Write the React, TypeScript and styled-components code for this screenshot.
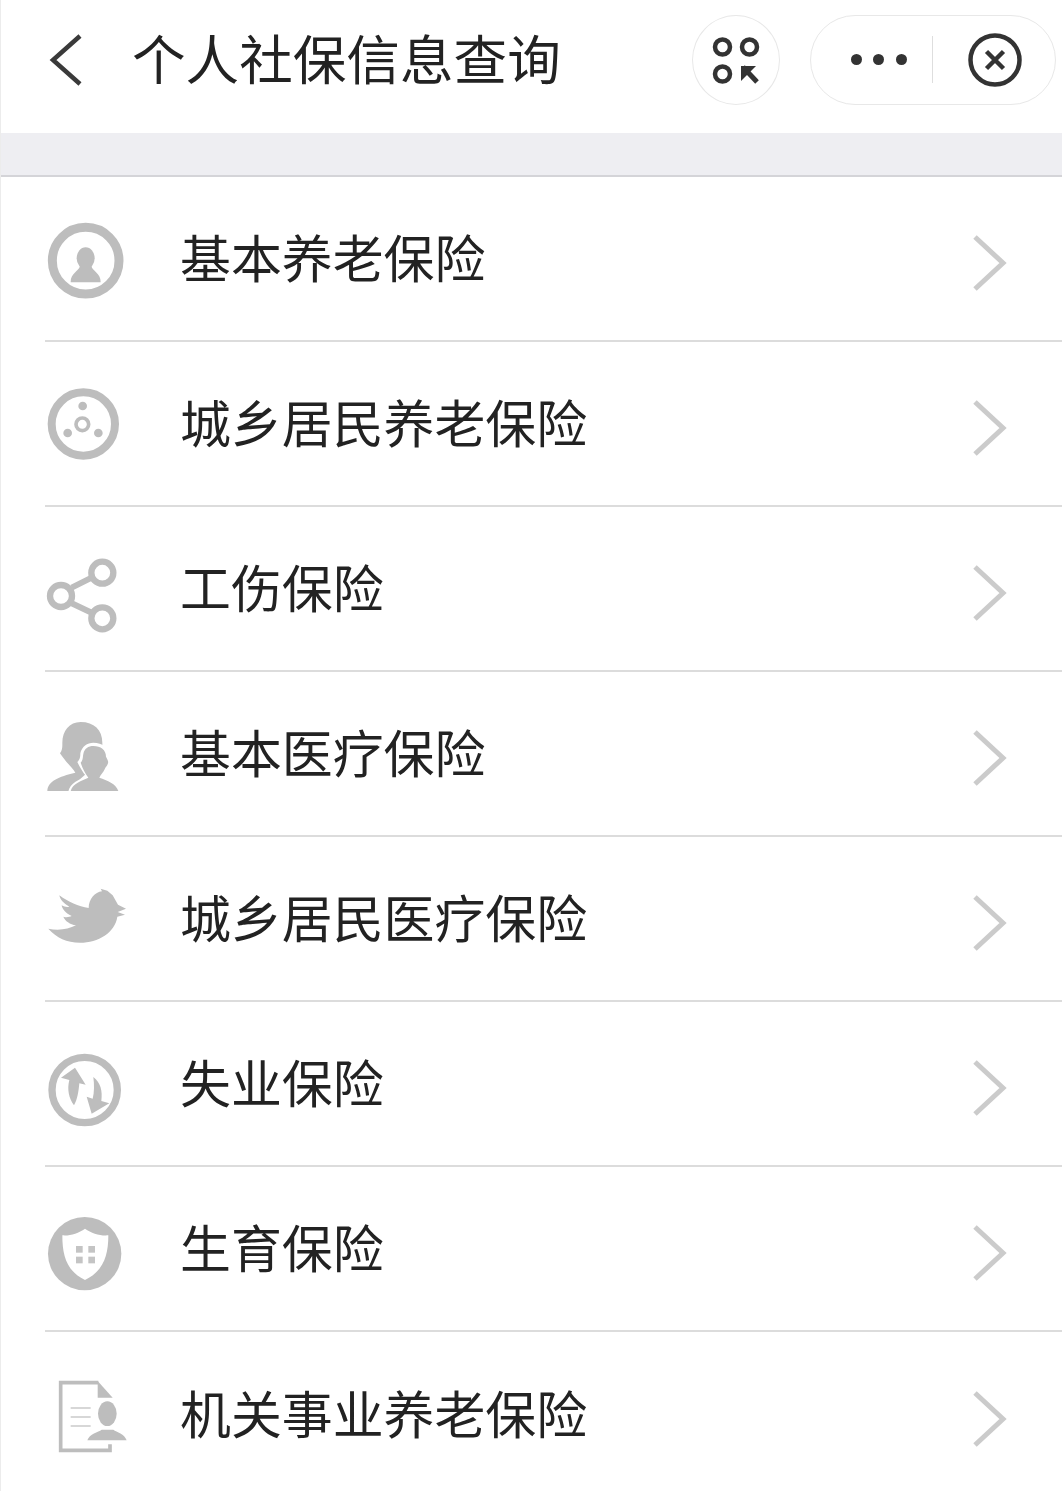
import React from 'react';
import styled, { createGlobalStyle } from 'styled-components';

const Global = createGlobalStyle`
  html, body { margin: 0; padding: 0; background: #fff; }
  #root { width: 1062px; height: 1491px; overflow: hidden; }
`;

const Page = styled.div`
  width: 1062px;
  height: 1491px;
  box-sizing: border-box;
  background: #fff;
  border-left: 1px solid #ececec;
  font-family: "Noto Sans CJK SC", "Liberation Sans", sans-serif;
  color: #222;
  overflow: hidden;
`;

const Header = styled.header`
  height: 133px;
  box-sizing: border-box;
  display: flex;
  align-items: center;
  padding: 0 6px 14px 47px;
`;

const BackIcon = styled.svg`
  width: 36px;
  height: 56px;
  flex: none;
`;

const Title = styled.h1`
  margin: 0 0 5px 48px;
  font-size: 53.6px;
  font-weight: 400;
  line-height: 60px;
  white-space: nowrap;
  flex: 1;
`;

const RoundButton = styled.div`
  width: 88px;
  height: 90px;
  box-sizing: border-box;
  border: 1px solid #e8e8e8;
  border-radius: 50%;
  display: flex;
  align-items: center;
  justify-content: center;
  margin-right: 30px;
  flex: none;
`;

const Capsule = styled.div`
  width: 246px;
  height: 90px;
  box-sizing: border-box;
  border: 1px solid #e8e8e8;
  border-radius: 45px;
  display: flex;
  align-items: center;
  flex: none;
`;

const MoreDots = styled.div`
  width: 121px;
  display: flex;
  justify-content: center;
  gap: 11.5px;
  padding-left: 14px;
  box-sizing: border-box;
`;

const Dot = styled.span`
  width: 11px;
  height: 11px;
  border-radius: 50%;
  background: #333;
`;

const Divider = styled.span`
  width: 1px;
  height: 47px;
  background: #dedede;
`;

const CloseIcon = styled.svg`
  width: 56px;
  height: 56px;
  margin-left: 34px;
  flex: none;
`;

const Band = styled.div`
  height: 44px;
  box-sizing: border-box;
  background: #eeeef2;
  border-bottom: 2px solid #d4d4d8;
`;

const Row = styled.div`
  padding-left: 44px;
`;

const RowInner = styled.div<{ $last?: boolean }>`
  height: 165px;
  box-sizing: border-box;
  display: flex;
  align-items: center;
  border-bottom: ${p => (p.$last ? 'none' : '2px solid #dcdcdc')};
  padding-right: 54px;
`;

const IconSlot = styled.svg`
  width: 100px;
  height: 110px;
  flex: none;
`;

const Label = styled.span`
  margin: 0 0 6px 35px;
  font-size: 50.9px;
  font-weight: 400;
  line-height: 60px;
  white-space: nowrap;
  flex: 1;
`;

const Chevron = styled.svg`
  width: 36px;
  height: 60px;
  flex: none;
  margin-top: 8px;
`;

const G = '#bdbdbd';

const icons: React.ReactNode[] = [
  <>
    <circle cx="167" cy="149" r="100" fill="none" stroke={G} strokeWidth="27" />
    <ellipse cx="167" cy="142" rx="27" ry="33" fill={G} />
    <path d="M150 165 C146 182 122 185 122 214 H212 C212 185 188 182 184 165 Z" fill={G} />
  </>,
  <>
    <circle cx="160" cy="639" r="95" fill="none" stroke={G} strokeWidth="24" />
    <circle cx="158" cy="585" r="13" fill={G} />
    <circle cx="113" cy="666" r="13" fill={G} />
    <circle cx="205" cy="666" r="13" fill={G} />
    <circle cx="157" cy="640" r="19" fill="none" stroke={G} strokeWidth="11" />
  </>,
  <>
    <path d="M125 125 L185 95 M125 172 L185 200" stroke={G} strokeWidth="18" fill="none" />
    <circle cx="217" cy="80" r="33" fill="none" stroke={G} strokeWidth="19" />
    <circle cx="93" cy="150" r="33" fill="none" stroke={G} strokeWidth="19" />
    <circle cx="217" cy="217" r="33" fill="none" stroke={G} strokeWidth="19" />
  </>,
  <>
    <path d="M152 528 C192 528 217 552 217 590 L217 640 L150 700 L130 735 H52 C54 705 85 692 136 680 C128 665 108 650 90 622 C98 612 97 600 97 590 C97 555 118 528 152 528 Z" fill={G} />
    <path d="M114 740 C120 708 150 702 168 690 C158 678 150 665 142 648 C151 640 151 630 151 622 C155 602 172 590 190 590 C218 590 236 606 236 630 C240 636 244 642 244 650 C244 660 236 666 232 672 C228 680 222 686 216 692 C238 700 266 708 270 740 Z" fill="#fff" />
    <path d="M122 735 C128 712 152 706 175 695 C165 680 158 668 152 650 C160 642 158 632 160 624 C163 608 175 600 190 600 C212 600 228 612 228 632 C232 640 236 645 234 652 C232 660 226 664 224 670 C220 680 212 686 208 695 C232 704 258 712 265 735 Z" fill={G} />
  </>,
  <path
    d="M88 58 C115 78 145 92 176 96 C176 70 195 48 216 46 L212 38 L232 44 L248 58 L264 86 L288 98 L263 108 L285 116 L262 122 C255 170 205 200 150 200 C110 200 80 185 55 158 C85 165 115 160 138 148 C120 145 105 135 100 122 C110 125 118 123 125 120 C105 112 95 95 95 88 C103 92 110 94 118 92 C100 82 90 70 88 58 Z"
    fill={G}
  />,
  <>
    <circle cx="164" cy="642" r="98" fill="none" stroke={G} strokeWidth="22" />
    <path d="M135 575 L167 626 L148 622 C146 645 142 672 132 688 C116 665 111 640 118 612 L93 605 Z" fill={G} />
    <path d="M190 603 C212 620 218 645 214 675 L238 682 L185 713 L170 662 L188 668 C193 650 193 625 190 603 Z" fill={G} />
  </>,
  <>
    <circle cx="164" cy="143" r="110" fill={G} />
    <path d="M165 68 C145 82 120 90 97 88 C97 150 110 195 165 222 C220 195 235 150 235 88 C210 90 185 82 165 68 Z" fill="#fff" />
    <rect x="138" y="120" width="20" height="20" fill="#c4c4c4" />
    <rect x="175" y="120" width="20" height="20" fill="#c4c4c4" />
    <rect x="138" y="152" width="20" height="20" fill="#c4c4c4" />
    <rect x="175" y="152" width="20" height="20" fill="#c4c4c4" />
  </>,
  <>
    <path d="M205 527 H92 V730 H240 V712" fill="none" stroke={G} strokeWidth="11" />
    <path d="M203 522 L248 572 H203 Z" fill={G} />
    <path d="M122 603 H182 M122 630 H182 M122 657 H182" stroke="#cacaca" strokeWidth="5" fill="none" />
    <ellipse cx="232" cy="620" rx="28" ry="37" fill={G} />
    <path d="M172 700 C178 680 205 676 215 668 H250 C260 676 284 680 290 700 Z" fill={G} />
  </>,
];

const viewY = [-21, 474, -36, 459, -36, 459, -36, 459];

const labels = [
  '基本养老保险',
  '城乡居民养老保险',
  '工伤保险',
  '基本医疗保险',
  '城乡居民医疗保险',
  '失业保险',
  '生育保险',
  '机关事业养老保险',
];

export default function App() {
  return (
    <Page>
      <Global />
      <Header>
        <BackIcon viewBox="0 0 36 56">
          <path d="M32 4 L5 28 L32 52" fill="none" stroke="#3a3a3a" strokeWidth="4.5" />
        </BackIcon>
        <Title>个人社保信息查询</Title>
        <RoundButton>
          <svg width="60" height="60" viewBox="0 0 60 60">
            <g fill="none" stroke="#333" strokeWidth="4.5">
              <circle cx="16.5" cy="17" r="7.5" />
              <circle cx="43.5" cy="17" r="7.5" />
              <circle cx="16.5" cy="44" r="7.5" />
              <path d="M37 37 L51 52" strokeWidth="5" />
            </g>
            <path d="M35 36 H50 L35 51 Z" fill="#333" />
          </svg>
        </RoundButton>
        <Capsule>
          <MoreDots>
            <Dot />
            <Dot />
            <Dot />
          </MoreDots>
          <Divider />
          <CloseIcon viewBox="0 0 56 56">
            <circle cx="28" cy="28" r="24.5" fill="none" stroke="#333" strokeWidth="4.5" />
            <path d="M19.5 19.5 L36.5 36.5 M36.5 19.5 L19.5 36.5" stroke="#333" strokeWidth="4.5" fill="none" />
          </CloseIcon>
        </Capsule>
      </Header>
      <Band />
      {labels.map((label, i) => (
        <Row key={label}>
          <RowInner $last={i === labels.length - 1}>
            <IconSlot viewBox={`45 ${viewY[i]} 300 330`}>{icons[i]}</IconSlot>
            <Label>{label}</Label>
            <Chevron viewBox="0 0 36 60">
              <path d="M3 4 L31 30 L3 56" fill="none" stroke="#cbcbcb" strokeWidth="5" />
            </Chevron>
          </RowInner>
        </Row>
      ))}
    </Page>
  );
}
